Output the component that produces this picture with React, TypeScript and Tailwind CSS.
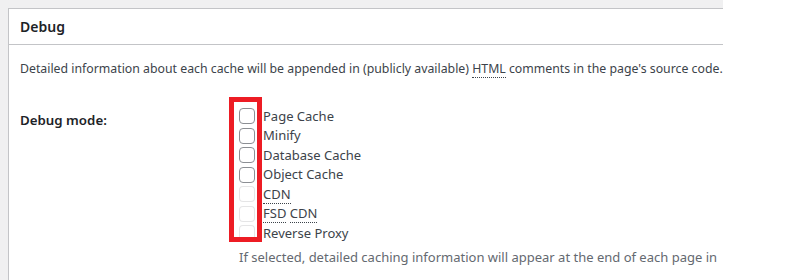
import React from "react";

const Dotted = ({ children }: { children: React.ReactNode }) => (
  <span className="border-b border-dotted border-[#3c434a]">{children}</span>
);

const rows: { label: React.ReactNode; disabled?: boolean }[] = [
  { label: "Page Cache" },
  { label: "Minify" },
  { label: "Database Cache" },
  { label: "Object Cache" },
  { label: <Dotted>CDN</Dotted>, disabled: true },
  {
    label: (
      <>
        <Dotted>FSD</Dotted> <Dotted>CDN</Dotted>
      </>
    ),
    disabled: true,
  },
  { label: "Reverse Proxy", disabled: true },
];

export default function App() {
  return (
    <div className="w-[804px] h-[280px] overflow-hidden flex bg-white font-['Noto_Sans',sans-serif] text-[13px] text-[#3c434a]">
      <div className="w-[723px] shrink-0 bg-[#f0f0f1] pl-2 pt-2">
        <div className="h-full bg-white border-l border-t border-[#c3c4c7]">
          <div className="h-[36px] border-b border-[#c3c4c7] px-[11px] flex items-center text-[14px] font-semibold text-[#1d2327]">
            Debug
          </div>
          <div className="px-[11px]">
            <p className="mt-[14px] leading-[19.5px] whitespace-nowrap text-[12.3px]">
              Detailed information about each cache will be appended in (publicly available){" "}
              <Dotted>HTML</Dotted> comments in the page's source code.
            </p>
            <div className="flex mt-[13px]">
              <div className="w-[219px] shrink-0 pt-[20px] text-[13.3px] font-semibold leading-[1.3] text-[#1d2327]">
                Debug mode:
              </div>
              <div className="pt-[15px] w-[484px]">
                <div className="relative">
                  {rows.map((r, i) => (
                    <div key={i} className="h-[19.5px] flex items-center">
                      <span
                        className={
                          r.disabled
                            ? "w-4 h-4 shrink-0 rounded-[4px] border border-[#dcdcde]/75 bg-white/50"
                            : "w-4 h-4 shrink-0 rounded-[4px] border border-[#8c8f94] bg-white"
                        }
                      />
                      <span className="ml-[8px] leading-[19.5px] whitespace-nowrap">{r.label}</span>
                    </div>
                  ))}
                  <div className="absolute left-[-10px] top-[-10px] w-[33px] h-[145px] border-[5px] border-[#ed1c24]" />
                </div>
                <p className="mt-[5px] leading-[19.5px] text-[#646970] whitespace-nowrap">
                  If selected, detailed caching information will appear at the end of each page in
                </p>
              </div>
            </div>
          </div>
        </div>
      </div>
      <div className="flex-1 bg-white" />
    </div>
  );
}
